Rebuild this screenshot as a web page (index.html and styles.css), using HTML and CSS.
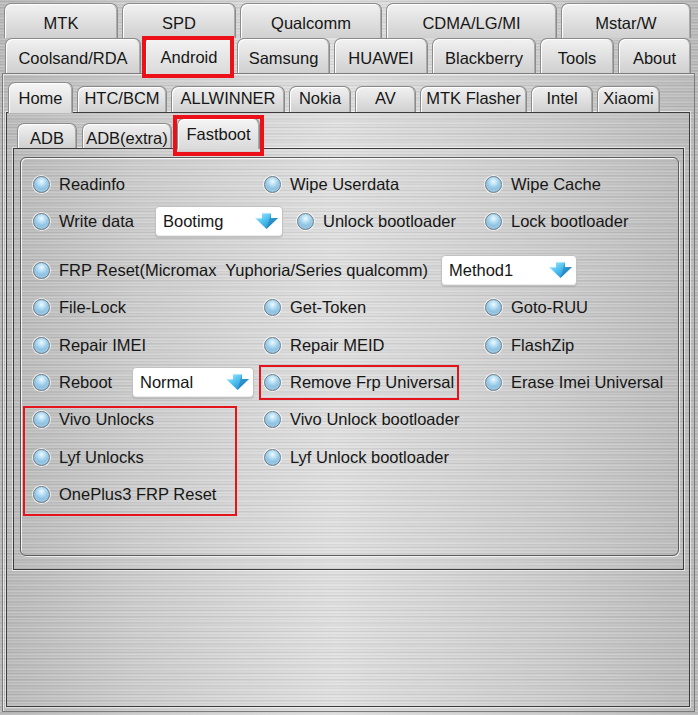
FILE: index.html
```html
<!DOCTYPE html>
<html>
<head>
    <meta charset="utf-8">
    <title>Android - Fastboot</title>
    <link rel="stylesheet" href="styles.css">
</head>
<body>
<div class="window">
    <!-- Vendor tabs, back row -->
    <div class="tabrow vendor-back">
        <div class="tab">MTK</div>
        <div class="tab">SPD</div>
        <div class="tab">Qualcomm</div>
        <div class="tab">CDMA/LG/MI</div>
        <div class="tab">Mstar/W</div>
    </div>
    <!-- Vendor tabs, front row -->
    <div class="tabrow vendor-front">
        <div class="tab">Coolsand/RDA</div>
        <div class="tab active marked">Android</div>
        <div class="tab">Samsung</div>
        <div class="tab">HUAWEI</div>
        <div class="tab">Blackberry</div>
        <div class="tab">Tools</div>
        <div class="tab">About</div>
    </div>

    <div class="panel main-panel">
        <div class="tabrow android-tabs">
            <div class="tab active">Home</div>
            <div class="tab">HTC/BCM</div>
            <div class="tab">ALLWINNER</div>
            <div class="tab">Nokia</div>
            <div class="tab">AV</div>
            <div class="tab">MTK Flasher</div>
            <div class="tab">Intel</div>
            <div class="tab">Xiaomi</div>
        </div>

        <div class="panel home-panel">
            <div class="tabrow mode-tabs">
                <div class="tab">ADB</div>
                <div class="tab">ADB(extra)</div>
                <div class="tab active marked">Fastboot</div>
            </div>

            <div class="panel page">
                <div class="group">
                    <div class="options">
                        <!-- row 1 -->
                        <label class="opt"><span class="radio"></span>Readinfo</label>
                        <label class="opt"><span class="radio"></span>Wipe Userdata</label>
                        <label class="opt"><span class="radio"></span>Wipe Cache</label>

                        <!-- row 2 -->
                        <div class="opt-line span-2">
                            <label class="opt write-data"><span class="radio"></span>Write data</label>
                            <div class="combo combo-boot">Bootimg
                                <svg class="drop" width="25" height="18" viewBox="0 0 25 18"><use href="#drop-arrow"/></svg>
                            </div>
                            <label class="opt unlock"><span class="radio"></span>Unlock bootloader</label>
                        </div>
                        <label class="opt"><span class="radio"></span>Lock bootloader</label>

                        <!-- row 3 -->
                        <div class="opt-line span-3 frp-line">
                            <label class="opt frp"><span class="radio"></span>FRP Reset(Micromax&nbsp; Yuphoria/Series qualcomm)</label>
                            <div class="combo combo-method">Method1
                                <svg class="drop" width="25" height="18" viewBox="0 0 25 18"><use href="#drop-arrow"/></svg>
                            </div>
                        </div>

                        <!-- row 4 -->
                        <label class="opt"><span class="radio"></span>File-Lock</label>
                        <label class="opt"><span class="radio"></span>Get-Token</label>
                        <label class="opt"><span class="radio"></span>Goto-RUU</label>

                        <!-- row 5 -->
                        <label class="opt"><span class="radio"></span>Repair IMEI</label>
                        <label class="opt"><span class="radio"></span>Repair MEID</label>
                        <label class="opt"><span class="radio"></span>FlashZip</label>

                        <!-- row 6 -->
                        <div class="opt-line">
                            <label class="opt reboot"><span class="radio"></span>Reboot</label>
                            <div class="combo combo-reboot">Normal
                                <svg class="drop" width="25" height="18" viewBox="0 0 25 18"><use href="#drop-arrow"/></svg>
                            </div>
                        </div>
                        <label class="opt flagged"><span class="radio"></span>Remove Frp Universal</label>
                        <label class="opt"><span class="radio"></span>Erase Imei Universal</label>

                        <!-- rows 7-9 -->
                        <label class="opt col-1 row-7"><span class="radio"></span>Vivo Unlocks</label>
                        <label class="opt col-2 row-7"><span class="radio"></span>Vivo Unlock bootloader</label>
                        <label class="opt col-1 row-8"><span class="radio"></span>Lyf Unlocks</label>
                        <label class="opt col-2 row-8"><span class="radio"></span>Lyf Unlock bootloader</label>
                        <label class="opt col-1 row-9"><span class="radio"></span>OnePlus3 FRP Reset</label>
                        <div class="flag-box"></div>
                    </div>
                </div>
            </div>
        </div>
    </div>
</div>

<!-- shared arrow for the drop-down boxes -->
<svg width="0" height="0" class="defs">
    <defs>
        <linearGradient id="arrow-fill" x1="0" y1="0" x2="1" y2="1">
            <stop offset="0" stop-color="#b4ecff"/>
            <stop offset="0.45" stop-color="#4cc0f0"/>
            <stop offset="1" stop-color="#1577c0"/>
        </linearGradient>
        <g id="drop-arrow">
            <path d="M8 1 H17 V6 H24 L12.5 17 L1 6 H8 Z" fill="url(#arrow-fill)"/>
            <path d="M17 1 V6 H24 L12.5 17 Z" fill="#0d5f9c" opacity="0.35"/>
            <path d="M8 1 H17 M1 6 H8" stroke="#e6f8ff" stroke-width="1" fill="none"/>
        </g>
    </defs>
</svg>
</body>
</html>
```

FILE: styles.css
```css
* {
    box-sizing: border-box;
}

body {
    margin: 0;
    width: 698px;
    height: 715px;
    overflow: hidden;
    font-family: "Liberation Sans", Arial, sans-serif;
    font-size: 16.5px;
    color: #161616;
    /* brushed metal */
    background:
        repeating-linear-gradient(180deg, rgba(255, 255, 255, 0.12) 0 1px, rgba(0, 0, 0, 0.04) 1px 2px, rgba(255, 255, 255, 0) 2px 3px),
        repeating-linear-gradient(180deg, rgba(0, 0, 0, 0.03) 0 2px, rgba(255, 255, 255, 0.05) 2px 5px, rgba(0, 0, 0, 0) 5px 7px),
        linear-gradient(90deg, #b9b9b9 0%, #cdcdcd 20%, #e0e0e0 48%, #dbdbdb 55%, #cbcbcb 80%, #bababa 100%);
}

.defs {
    position: absolute;
}

.window {
    height: 715px;
    padding: 3px 3px 3px 2px;
}

/* Tabs */
.tabrow {
    display: grid;
    position: relative;
}

.tab {
    position: relative;
    display: flex;
    align-items: center;
    justify-content: center;
    white-space: nowrap;
    background: linear-gradient(180deg, #f1f1f1 0%, #e2e2e2 45%, #d0d0d0 100%);
    border: 1px solid #8b8b8b;
    border-bottom: none;
    border-radius: 7px 7px 0 0;
    box-shadow: inset 1px 1px 0 #ffffff, inset -1px 0 0 #aaaaaa;
}

.tab.active {
    background: linear-gradient(180deg, #f5f5f5 0%, #e7e7e7 50%, #dadada 100%);
    z-index: 1;
    margin-bottom: -1px;
}

/* red frame round the opened tab */
.tab.marked::after {
    content: "";
    position: absolute;
    border: 4px solid #ec1018;
    z-index: 2;
}

.vendor-back {
    grid-template-columns: 114px 114px 142px 171px 130px;
    column-gap: 4px;
    height: 35px;
    margin-left: 2px;
}

.vendor-back .tab {
    padding-top: 5px;
}

.vendor-front {
    grid-template-columns: 136px 88px 93px 94px 104px 74px 73px;
    column-gap: 4px;
    height: 37px;
    margin: -2px 0 0 3px;
    z-index: 1;
}

.vendor-front .tab {
    margin-top: 2px;
    padding-top: 4px;
}

.vendor-front .tab.active {
    margin-top: 0;
}

.vendor-front .tab.marked::after {
    top: -1px;
    left: -4px;
    right: -2px;
    bottom: -4px;
}

.android-tabs {
    grid-template-columns: 65px 90px 114px 62px 61px 107px 62px 63px;
    column-gap: 4px;
    height: 30px;
    margin-left: 2px;
}

.android-tabs .tab {
    margin-top: 4px;
    padding-bottom: 3px;
}

.android-tabs .tab.active {
    margin-top: 0;
    padding-bottom: 0;
}

.mode-tabs {
    grid-template-columns: 60px 90px 83px;
    column-gap: 5px;
    height: 30px;
    margin-left: 4px;
}

.mode-tabs .tab {
    margin-top: 5px;
    padding-top: 4px;
}

.mode-tabs .tab.active {
    margin-top: 0;
    padding-top: 0;
}

.mode-tabs .tab.marked::after {
    top: -4px;
    left: -5px;
    right: -5px;
    bottom: -7px;
}

/* Panels */
.main-panel {
    height: 639px;
    padding: 8px 4px 4px 3px;
    border: 1px solid #7b7b7b;
    box-shadow: inset 1px 1px 0 rgba(255, 255, 255, 0.6);
}

.home-panel {
    height: 595px;
    padding: 5px 5px 0 6px;
    border: 1px solid #3c3c3c;
    box-shadow: 0 0 0 1px rgba(255, 255, 255, 0.55);
}

.page {
    height: 422px;
    padding: 8px 4px 0 6px;
    border: 1px solid #3c3c3c;
    box-shadow: 0 0 0 1px rgba(255, 255, 255, 0.55);
}

.group {
    height: 399px;
    padding: 7.5px 0 0 12px;
    border: 1px solid #5c5c5c;
    border-radius: 6px;
    box-shadow: inset 1px 1px 0 rgba(255, 255, 255, 0.8), 1px 1px 0 rgba(255, 255, 255, 0.7);
}

/* Option grid */
.options {
    display: grid;
    grid-template-columns: 231px 221px 1fr;
    grid-template-rows: 37px 37px 49px 38px 37px 37px 38px 37px 37px;
    align-items: center;
}

.opt {
    display: flex;
    align-items: center;
    gap: 9px;
    height: 25px;
    white-space: nowrap;
    justify-self: start;
}

.radio {
    flex: none;
    width: 17px;
    height: 17px;
    border-radius: 50%;
    border: 1px solid #71808a;
    background: radial-gradient(circle at 50% 30%, #eef9ff 0, #b5ddf3 30%, #75b2d8 70%, #4f8db8 100%);
    box-shadow: 0 0 0 1px rgba(255, 255, 255, 0.75), inset 0 -2px 2px rgba(255, 255, 255, 0.35);
}

.opt-line {
    display: flex;
    align-items: center;
    height: 37px;
}

.span-2 {
    grid-column: 1 / 3;
}

.span-3 {
    grid-column: 1 / 4;
}

.frp-line {
    align-self: end;
}

.write-data {
    width: 122px;
}

.unlock {
    margin-left: 14px;
}

.frp {
    width: 408px;
}

.reboot {
    width: 99px;
}

.col-1 {
    grid-column: 1;
}

.col-2 {
    grid-column: 2;
}

.row-7 {
    grid-row: 7;
}

.row-8 {
    grid-row: 8;
}

.row-9 {
    grid-row: 9;
}

.flagged {
    outline: 2px solid #e3141c;
    outline-offset: 3px;
}

.flag-box {
    grid-row: 7 / 10;
    grid-column: 1;
    align-self: stretch;
    width: 214px;
    margin: 5px 0 -3px -10px;
    border: 2px solid #e3141c;
}

/* Drop-down boxes */
.combo {
    display: flex;
    align-items: center;
    justify-content: space-between;
    height: 31px;
    padding: 0 3px 0 7px;
    background: #ffffff;
    border: 1px solid #c2c2c2;
    border-radius: 4px;
    box-shadow: inset 0 -1px 0 #ececec, 0 1px 1px rgba(0, 0, 0, 0.12);
}

.combo-boot {
    width: 128px;
}

.combo-method {
    width: 136px;
}

.combo-reboot {
    width: 122px;
}

.drop {
    flex: none;
}
```
